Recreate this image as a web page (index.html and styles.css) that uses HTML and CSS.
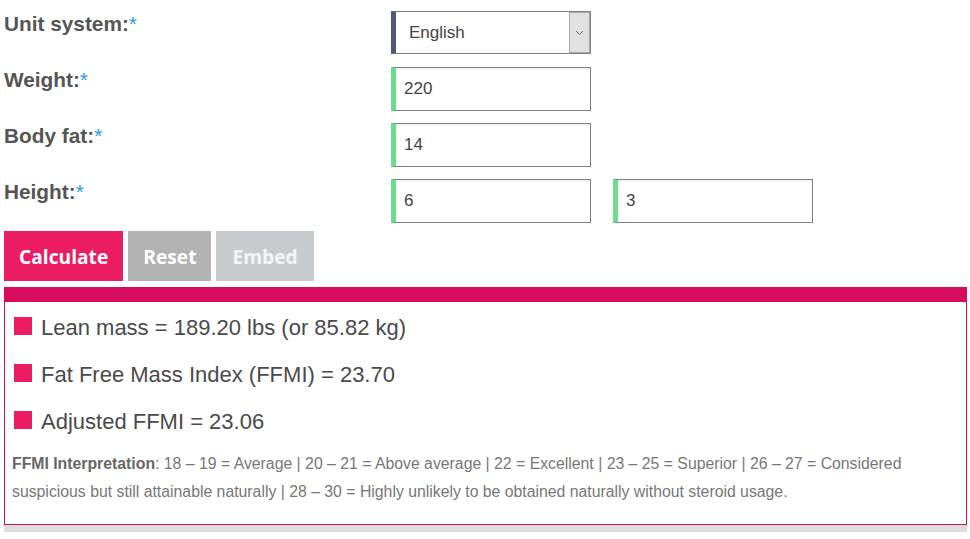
FILE: index.html
```html
<!DOCTYPE html>
<html>
<head>
<meta charset="utf-8">
<link rel="stylesheet" href="styles.css">
</head>
<body>
<div class="calc">
  <div class="row">
    <label class="lbl">Unit system:<span class="req">*</span></label>
    <div class="ctrls">
      <div class="selwrap">
        <select class="sel"><option>English</option><option>Metric</option></select>
        <span class="arrow"><svg width="9" height="6" viewBox="0 0 9 6"><path d="M1 1 L4.5 4.5 L8 1" fill="none" stroke="#666" stroke-width="1"/></svg></span>
      </div>
    </div>
  </div>
  <div class="row">
    <label class="lbl">Weight:<span class="req">*</span></label>
    <div class="ctrls"><input class="inp" type="text" value="220"></div>
  </div>
  <div class="row">
    <label class="lbl">Body fat:<span class="req">*</span></label>
    <div class="ctrls"><input class="inp" type="text" value="14"></div>
  </div>
  <div class="row">
    <label class="lbl">Height:<span class="req">*</span></label>
    <div class="ctrls"><input class="inp" type="text" value="6"><input class="inp" type="text" value="3"></div>
  </div>
  <div class="buttons">
    <button class="btn btn-calc">Calculate</button>
    <button class="btn btn-reset">Reset</button>
    <button class="btn btn-embed">Embed</button>
  </div>
  <div class="result-wrap">
    <div class="result">
      <p class="item"><span class="sq"></span>Lean mass = 189.20 lbs (or 85.82 kg)</p>
      <p class="item"><span class="sq"></span>Fat Free Mass Index (FFMI) = 23.70</p>
      <p class="item"><span class="sq"></span>Adjusted FFMI = 23.06</p>
      <p class="note"><b>FFMI Interpretation</b>: 18 – 19 = Average | 20 – 21 = Above average | 22 = Excellent | 23 – 25 = Superior | 26 – 27 = Considered suspicious but still attainable naturally | 28 – 30 = Highly unlikely to be obtained naturally without steroid usage.</p>
    </div>
  </div>
</div>
</body>
</html>
```

FILE: styles.css
```css
html, body {
  margin: 0;
  padding: 0;
  background: #fff;
}
body {
  font-family: "Liberation Sans", Arial, sans-serif;
  color: #555;
}
.calc {
  padding: 11px 3px 0 4px;
}
.row {
  display: flex;
  align-items: flex-start;
  height: 44px;
  margin-bottom: 12px;
}
.lbl {
  width: 387px;
  flex: none;
  font-size: 20.8px;
  font-weight: bold;
  color: #555;
  line-height: 24px;
  padding-top: 1px;
}
.req {
  color: #2b9be0;
  font-weight: normal;
}
.ctrls {
  display: flex;
  gap: 22px;
}
.selwrap {
  display: flex;
  width: 200px;
  height: 43px;
  box-sizing: border-box;
  border: 1px solid #808080;
  border-left: 5px solid #4f5a78;
  background: #fff;
}
.sel {
  flex: 1;
  appearance: none;
  -webkit-appearance: none;
  border: none;
  background: #fff;
  font-family: "Liberation Sans", Arial, sans-serif;
  font-size: 17px;
  color: #444;
  padding: 0 0 0 13px;
  outline: none;
}
.arrow {
  width: 21px;
  flex: none;
  box-sizing: border-box;
  background: #e1e1e1;
  border: 1px solid #a9a9a9;
  display: flex;
  align-items: center;
  justify-content: center;
}
.inp {
  width: 200px;
  height: 44px;
  box-sizing: border-box;
  border: 1px solid #808080;
  border-left: 5px solid #6edc8c;
  box-shadow: inset 0 1px 2px rgba(0,0,0,0.08);
  padding: 0 8px;
  font-family: "Liberation Sans", Arial, sans-serif;
  font-size: 17px;
  color: #444;
  outline: none;
  margin: 0;
}
.buttons {
  display: flex;
  gap: 5px;
  margin-top: -4px;
}
.btn {
  height: 50px;
  border: none;
  color: #fff;
  font-family: "Open Sans", sans-serif;
  font-weight: 700;
  font-size: 19.2px;
  padding: 0 15px;
  cursor: pointer;
}
.btn-calc { background: #ec1c62; }
.btn-reset { background: #b3b3b3; }
.btn-embed { background: #c8cbce; color: #f4f4f4; padding: 0 16px; }
.result-wrap {
  margin-top: 6px;
  width: 963px;
  border-bottom: 7px solid #dedede;
}
.result {
  box-sizing: border-box;
  border: 1px solid #d80c5e;
  border-top: 15px solid #d80c5e;
  padding: 12px 7px 18px 7px;
}
.item {
  margin: 0 0 20px 0;
  font-size: 22px;
  line-height: 27px;
  color: #4a4a4a;
}
.sq {
  display: inline-block;
  width: 18px;
  height: 18px;
  background: #ec1c62;
  margin: 0 9px 0 2px;
  vertical-align: baseline;
}
.note {
  margin: -5px 0 0 0;
  font-size: 15.8px;
  line-height: 28px;
  color: #777;
}
.note b {
  color: #666;
}
```
